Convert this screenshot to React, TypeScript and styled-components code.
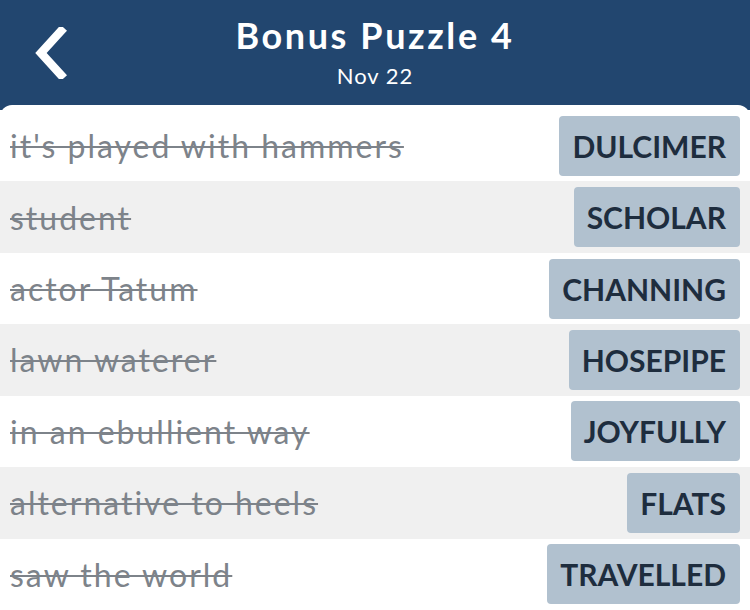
import styled, { createGlobalStyle } from 'styled-components';

const clues = [
  { clue: "it's played with hammers", answer: 'DULCIMER' },
  { clue: 'student', answer: 'SCHOLAR' },
  { clue: 'actor Tatum', answer: 'CHANNING' },
  { clue: 'lawn waterer', answer: 'HOSEPIPE' },
  { clue: 'in an ebullient way', answer: 'JOYFULLY' },
  { clue: 'alternative to heels', answer: 'FLATS' },
  { clue: 'saw the world', answer: 'TRAVELLED' },
];

function App() {
  return (
    <>
      <GlobalStyle />
      <Header>
        <BackButton aria-label="back">
          <svg width="34" height="52" viewBox="0 0 34 52">
            <path d="M27 4 L7 26 L27 48" fill="none" stroke="#fff" strokeWidth="8.5" strokeLinecap="square" />
          </svg>
        </BackButton>
        <TitleBlock>
          <Title>Bonus Puzzle 4</Title>
          <SubTitle>Nov 22</SubTitle>
        </TitleBlock>
        <span />
      </Header>
      <Panel>
        {clues.map((c, i) => (
          <Row key={c.answer} $shaded={i % 2 === 1}>
            <Clue>{c.clue}</Clue>
            <Answer>{c.answer}</Answer>
          </Row>
        ))}
      </Panel>
    </>
  );
}

export default App;

const GlobalStyle = createGlobalStyle`
  body {
    margin: 0;
    background: #22466f;
    font-family: Lato, "Open Sans", sans-serif;
  }
`;

const Header = styled.header`
  height: 105px;
  display: grid;
  grid-template-columns: 1fr auto 1fr;
  align-items: start;
  color: #fff;
`;

const BackButton = styled.button`
  background: none;
  border: none;
  padding: 0;
  margin: 27px 0 0 34px;
  width: 34px;
  height: 52px;
  justify-self: start;
  cursor: pointer;
`;

const TitleBlock = styled.div`
  display: flex;
  flex-direction: column;
  align-items: center;
  padding-top: 13px;
`;

const Title = styled.div`
  font-size: 36px;
  font-weight: 700;
  letter-spacing: 2.6px;
  line-height: 44px;
`;

const SubTitle = styled.div`
  font-size: 22px;
  letter-spacing: 1px;
  line-height: 28px;
  margin-top: 5px;
`;

const Panel = styled.main`
  background: #fff;
  border-radius: 12px 12px 0 0;
  padding-top: 5px;
  height: 505px;
  box-sizing: border-box;
  display: flex;
  flex-direction: column;
`;

const Row = styled.div<{ $shaded: boolean }>`
  flex: 1;
  display: flex;
  align-items: center;
  justify-content: space-between;
  padding: 0 10px;
  background: ${p => (p.$shaded ? '#f0f0f0' : '#fff')};
`;

const Clue = styled.span`
  font-size: 32px;
  letter-spacing: 2px;
  color: #7d838a;
  text-decoration: line-through;
  text-decoration-thickness: 2px;
`;

const Answer = styled.span`
  height: 60px;
  display: flex;
  align-items: center;
  padding: 0 14px 0 13px;
  border-radius: 4px;
  background: #b1c1cf;
  color: #1e2d3e;
  font-size: 30px;
  font-weight: 700;
`;
